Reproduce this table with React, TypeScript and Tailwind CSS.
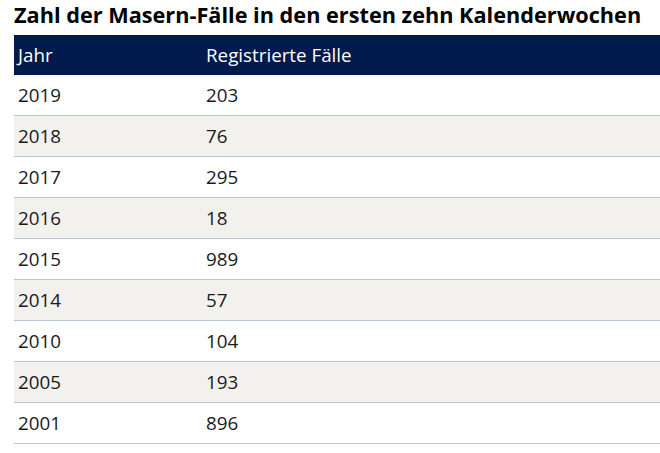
import React from "react";

const rows: [string, string][] = [
  ["2019", "203"],
  ["2018", "76"],
  ["2017", "295"],
  ["2016", "18"],
  ["2015", "989"],
  ["2014", "57"],
  ["2010", "104"],
  ["2005", "193"],
  ["2001", "896"],
];

export default function App() {
  return (
    <div className="w-[660px] h-[453px] bg-white overflow-hidden font-['Open_Sans',sans-serif]">
      <div className="pl-[14px] h-[35px] text-[21.7px] font-bold text-black leading-[29px] whitespace-nowrap">
        Zahl der Masern-Fälle in den ersten zehn Kalenderwochen
      </div>
      <div className="ml-[14px]">
        <div className="flex h-[40px] items-center bg-[#001a4b] text-white text-[18.8px]">
          <div className="w-[192px] pl-[4px]">Jahr</div>
          <div>Registrierte Fälle</div>
        </div>
        {rows.map(([y, n], i) => (
          <div
            key={y}
            className={`flex h-[41px] items-center border-b border-[#b7c6d4] text-[18.8px] text-[#1a1a1a] ${i % 2 === 1 ? "bg-[#f3f1ed]" : "bg-white"}`}
          >
            <div className="w-[192px] pl-[4px]">{y}</div>
            <div>{n}</div>
          </div>
        ))}
      </div>
    </div>
  );
}
